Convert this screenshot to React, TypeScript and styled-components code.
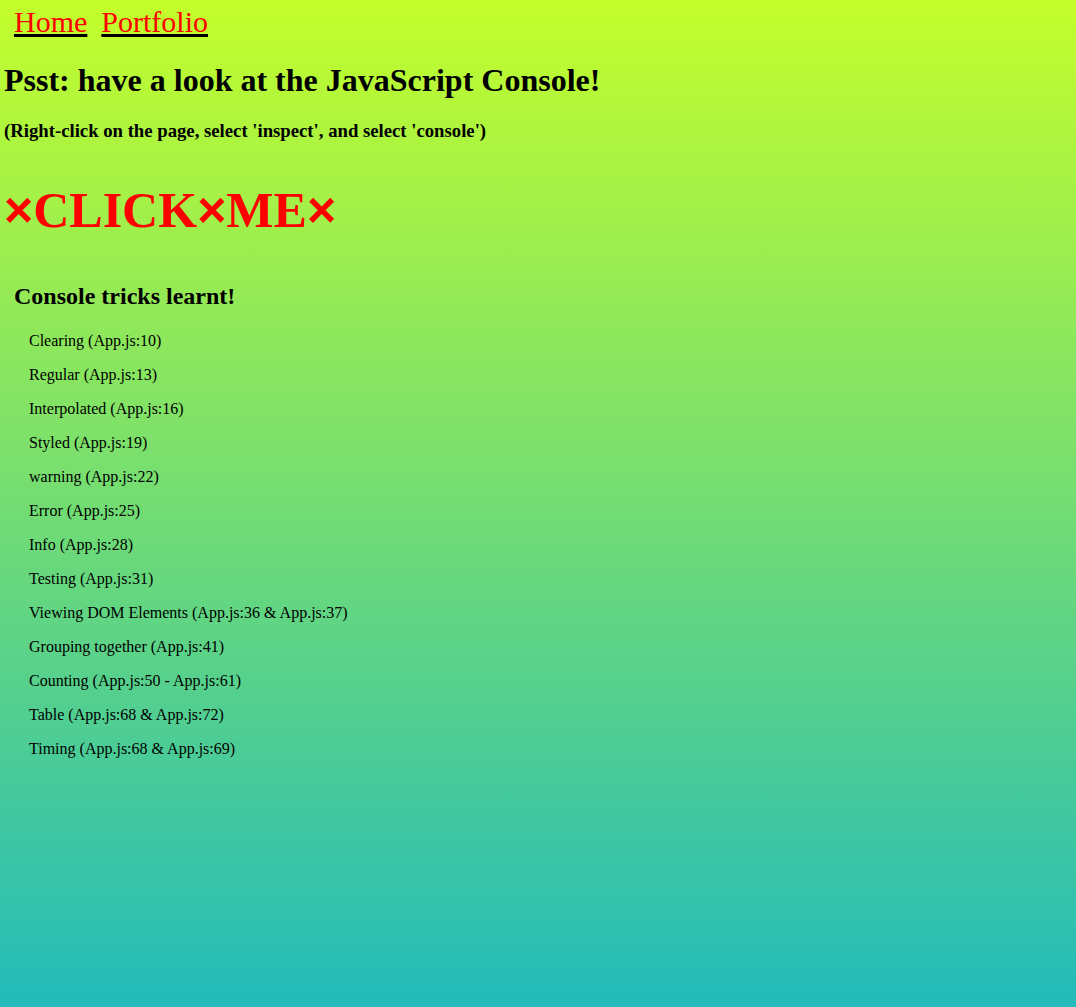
import React from "react";
import styled, { createGlobalStyle } from "styled-components";

const GlobalStyle = createGlobalStyle`
  html, body {
    margin: 0;
    padding: 0;
  }
  body {
    min-height: 100vh;
    background: linear-gradient(to bottom, #c4fe2b 0%, #22bbbb 100%);
    font-family: "Liberation Serif", "Times New Roman", serif;
    color: #000;
  }
`;

const Page = styled.div`
  min-height: 100vh;
  padding: 0 0 0 4px;
  box-sizing: border-box;
  display: flex;
  flex-direction: column;
`;

const Nav = styled.nav`
  display: flex;
  gap: 14px;
  padding: 5px 0 0 10px;
`;

const NavLink = styled.a`
  font-size: 30px;
  line-height: 34px;
  color: #ff0000;
  text-decoration: underline;
  text-decoration-color: #000;
  text-decoration-thickness: 3px;
  text-underline-offset: 2px;
  cursor: pointer;
`;

const Title = styled.h1`
  margin: 23px 0 0;
  font-size: 32px;
  line-height: 37px;
  font-weight: bold;
`;

const Hint = styled.h3`
  margin: 21px 0 0;
  font-size: 18.72px;
  line-height: 22px;
  font-weight: bold;
`;

const ClickMe = styled.h1`
  margin: 39px 0 0;
  font-size: 50px;
  line-height: 58px;
  font-weight: bold;
  color: #ff0000;
  cursor: pointer;
`;

const Cross = styled.span`
  font-family: "Liberation Sans", Arial, sans-serif;
  font-weight: bold;
`;

const Section = styled.section`
  margin-top: 43px;
  padding-left: 10px;
`;

const SectionTitle = styled.h2`
  margin: 0;
  font-size: 24px;
  line-height: 28px;
  font-weight: bold;
`;

const TrickList = styled.ul`
  list-style: none;
  margin: 22px 0 0;
  padding: 0 0 0 15px;
  display: flex;
  flex-direction: column;
  gap: 16px;
`;

const Trick = styled.li`
  font-size: 16px;
  line-height: 18px;
`;

const tricks = [
  "Clearing (App.js:10)",
  "Regular (App.js:13)",
  "Interpolated (App.js:16)",
  "Styled (App.js:19)",
  "warning (App.js:22)",
  "Error (App.js:25)",
  "Info (App.js:28)",
  "Testing (App.js:31)",
  "Viewing DOM Elements (App.js:36 & App.js:37)",
  "Grouping together (App.js:41)",
  "Counting (App.js:50 - App.js:61)",
  "Table (App.js:68 & App.js:72)",
  "Timing (App.js:68 & App.js:69)",
];

export default function App() {
  return (
    <>
      <GlobalStyle />
      <Page>
        <Nav>
          <NavLink>Home</NavLink>
          <NavLink>Portfolio</NavLink>
        </Nav>
        <Title>Psst: have a look at the JavaScript Console!</Title>
        <Hint>(Right-click on the page, select 'inspect', and select 'console')</Hint>
        <ClickMe>
          <Cross>×</Cross>CLICK<Cross>×</Cross>ME<Cross>×</Cross>
        </ClickMe>
        <Section>
          <SectionTitle>Console tricks learnt!</SectionTitle>
          <TrickList>
            {tricks.map((t) => (
              <Trick key={t}>{t}</Trick>
            ))}
          </TrickList>
        </Section>
      </Page>
    </>
  );
}
